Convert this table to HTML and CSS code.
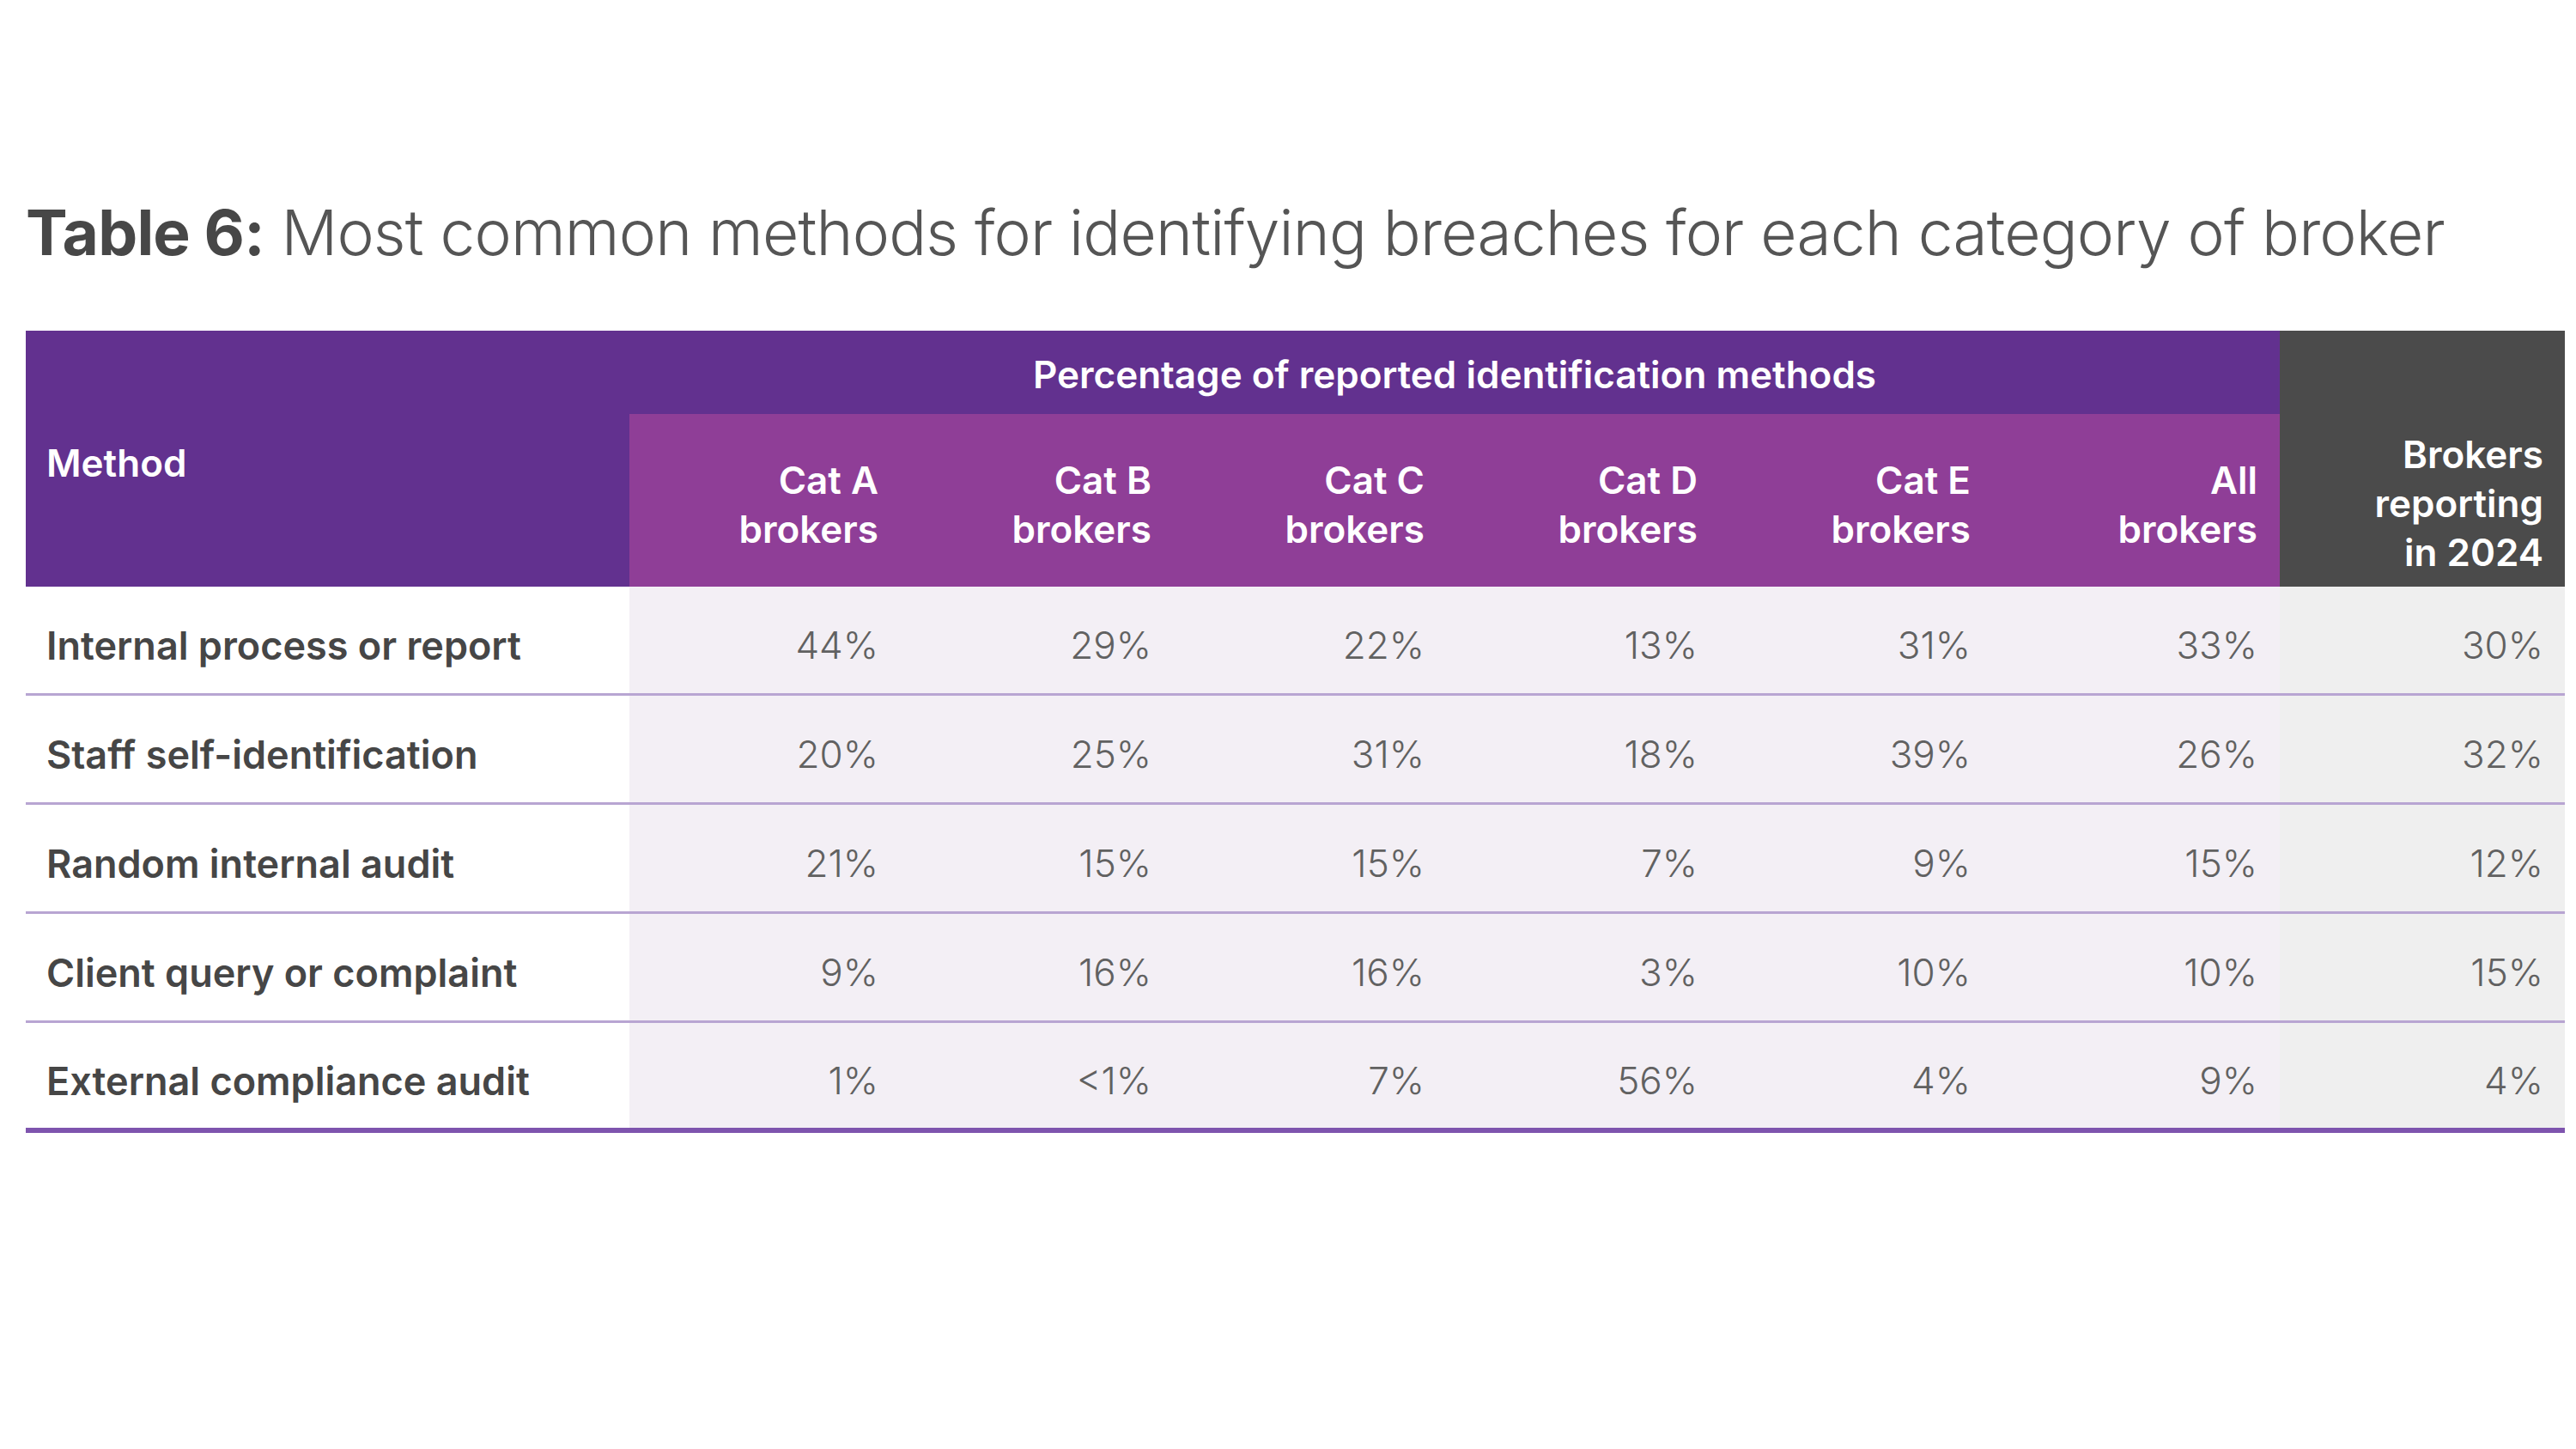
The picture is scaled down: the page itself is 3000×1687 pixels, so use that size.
FILE: index.html
```html
<!DOCTYPE html>
<html lang="en">
<head>
<meta charset="utf-8">
<title>Table 6</title>
<link rel="stylesheet" href="styles.css">
</head>
<body>
<main class="page">
  <h1 class="title"><strong>Table 6:</strong> Most common methods for identifying breaches for each category of broker</h1>
  <div class="table">
    <div class="head">
      <div class="h-method">Method</div>
      <div class="h-group">Percentage of reported identification methods</div>
      <div class="h-cat">Cat A<br>brokers</div>
      <div class="h-cat">Cat B<br>brokers</div>
      <div class="h-cat">Cat C<br>brokers</div>
      <div class="h-cat">Cat D<br>brokers</div>
      <div class="h-cat">Cat E<br>brokers</div>
      <div class="h-cat">All<br>brokers</div>
      <div class="h-prev">Brokers<br>reporting<br>in 2024</div>
    </div>
    <div class="row">
      <div class="c-method">Internal process or report</div>
      <div class="c-val">44%</div><div class="c-val">29%</div><div class="c-val">22%</div><div class="c-val">13%</div><div class="c-val">31%</div><div class="c-val">33%</div>
      <div class="c-prev">30%</div>
    </div>
    <div class="row">
      <div class="c-method">Staff self-identification</div>
      <div class="c-val">20%</div><div class="c-val">25%</div><div class="c-val">31%</div><div class="c-val">18%</div><div class="c-val">39%</div><div class="c-val">26%</div>
      <div class="c-prev">32%</div>
    </div>
    <div class="row">
      <div class="c-method">Random internal audit</div>
      <div class="c-val">21%</div><div class="c-val">15%</div><div class="c-val">15%</div><div class="c-val">7%</div><div class="c-val">9%</div><div class="c-val">15%</div>
      <div class="c-prev">12%</div>
    </div>
    <div class="row">
      <div class="c-method">Client query or complaint</div>
      <div class="c-val">9%</div><div class="c-val">16%</div><div class="c-val">16%</div><div class="c-val">3%</div><div class="c-val">10%</div><div class="c-val">10%</div>
      <div class="c-prev">15%</div>
    </div>
    <div class="row row-last">
      <div class="c-method">External compliance audit</div>
      <div class="c-val">1%</div><div class="c-val">&lt;1%</div><div class="c-val">7%</div><div class="c-val">56%</div><div class="c-val">4%</div><div class="c-val">9%</div>
      <div class="c-prev">4%</div>
    </div>
  </div>
</main>
</body>
</html>
```

FILE: styles.css
```css
html, body {
  margin: 0;
  padding: 0;
  background: #ffffff;
}

.page {
  font-family: Inter, "Noto Sans", "Liberation Sans", sans-serif;
  padding: 228px 13px 0 30px;
}

.title {
  margin: 0 0 71px 0;
  font-size: 73px;
  line-height: 86px;
  font-weight: 300;
  color: #555555;
  letter-spacing: -0.8px;
  white-space: nowrap;
}

.title strong {
  font-weight: 700;
  color: #474747;
}

.table {
  width: 2957px;
}

.head,
.row {
  display: grid;
  grid-template-columns: 703px 316px 318px 318px 318px 318px 334px 332px;
}

.head {
  grid-template-rows: 97px 201px;
  color: #ffffff;
  font-size: 44px;
  font-weight: 600;
  line-height: 57px;
}

.h-method {
  grid-column: 1;
  grid-row: 1 / 3;
  background: #62318f;
  display: flex;
  align-items: center;
  padding: 10px 0 0 24px;
}

.h-group {
  grid-column: 2 / 8;
  grid-row: 1;
  background: #62318f;
  display: flex;
  align-items: center;
  justify-content: center;
  padding-top: 6px;
}

.h-cat {
  grid-row: 2;
  background: #8f3e97;
  display: flex;
  align-items: center;
  justify-content: flex-end;
  text-align: right;
  padding: 10px 26px 0 0;
}

.h-prev {
  grid-column: 8;
  grid-row: 1 / 3;
  background: #4b4b4b;
  display: flex;
  align-items: center;
  justify-content: flex-end;
  text-align: right;
  padding: 104px 25px 0 0;
}

.row {
  height: 124px;
  border-bottom: 3px solid #b8a5d2;
  font-size: 44px;
}

.row-last {
  height: 122px;
  border-bottom: 6px solid #7e54ae;
}

.c-method {
  background: #ffffff;
  color: #464646;
  font-weight: 600;
  font-size: 45px;
  display: flex;
  align-items: center;
  padding: 12px 0 0 24px;
}

.c-val,
.c-prev {
  display: flex;
  align-items: center;
  justify-content: flex-end;
  padding: 12px 26px 0 0;
  color: #616161;
  font-weight: 300;
}

.c-val {
  background: #f3eff5;
}

.c-prev {
  background: #efefef;
  padding-right: 25px;
}
```
